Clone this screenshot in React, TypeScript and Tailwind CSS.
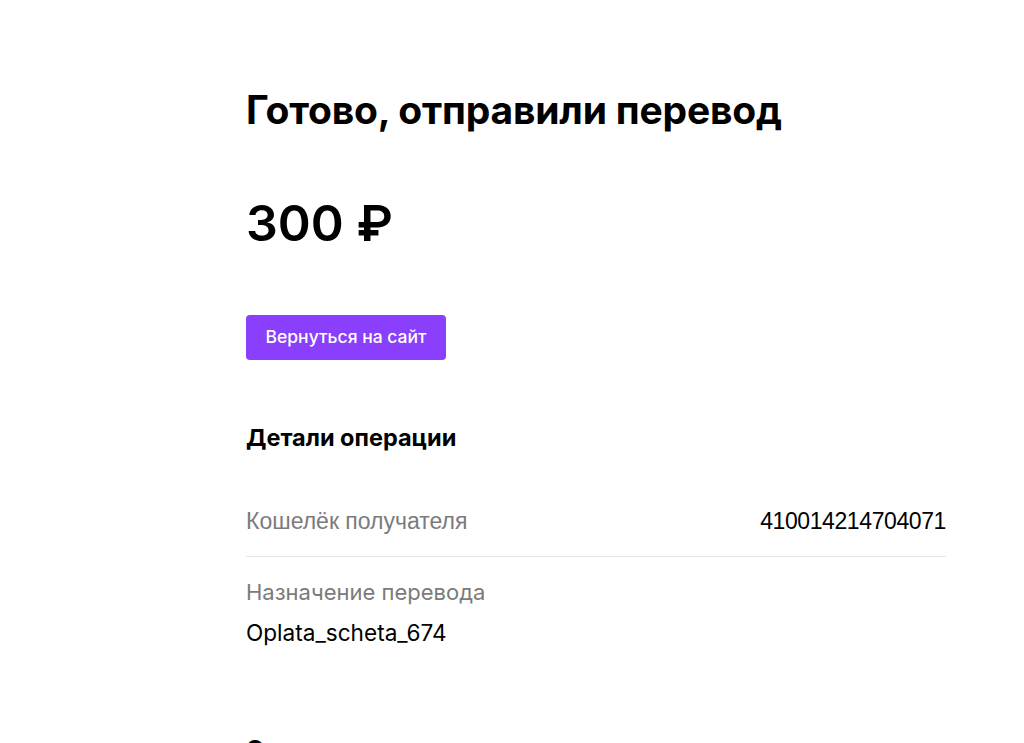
import React from 'react';

const details = [
    { label: 'Кошелёк получателя', value: '410014214704071', inline: true },
    { label: 'Назначение перевода', value: 'Oplata_scheta_674', inline: false },
];

const App: React.FC = () => {
    return (
        <div className="min-h-[743px] bg-white text-black font-['Inter',sans-serif] overflow-hidden relative">
            <main className="w-[700px] ml-[246px] pt-[86px]">
                <h1 className="text-[39px] leading-[48px] font-bold tracking-[-0.2px]">Готово, отправили перевод</h1>

                <div className="mt-[57px] text-[50px] leading-[64px] font-semibold">300 ₽</div>

                <button className="mt-[60px] h-[45px] w-[200px] rounded-[4px] bg-[#8a3ffc] text-white text-[17.5px] font-medium">
                    Вернуться на сайт
                </button>

                <h2 className="mt-[63px] text-[23.5px] leading-[30px] font-bold">Детали операции</h2>

                <div className="mt-[55px]">
                    {details.map((row) =>
                        row.inline ? (
                            <div key={row.label} className="flex justify-between items-center pb-[22px] border-b border-[#e6e6e6]">
                                <span className="text-[23px] leading-[26px] text-[#7b7b7b] font-['Liberation_Sans',sans-serif]">{row.label}</span>
                                <span className="text-[23px] leading-[26px] font-['Liberation_Sans',sans-serif] tracking-[-0.4px]">{row.value}</span>
                            </div>
                        ) : (
                            <div key={row.label} className="pt-[22px]">
                                <div className="text-[22px] leading-[26px] text-[#7b7b7b]">{row.label}</div>
                                <div className="mt-[15px] text-[22.6px] leading-[26px]">{row.value}</div>
                            </div>
                        )
                    )}
                </div>

                <h2 className="mt-[88px] text-[23.5px] leading-[30px] font-bold">Отправитель</h2>
            </main>

            {/* bottom strip */}
            <div className="absolute bottom-0 left-0 right-0 h-[2px] flex">
                <div className="w-[136px] bg-[#c8c8c8]" />
                <div className="flex-1 bg-[#1f2b2a]" />
            </div>
        </div>
    );
};

export default App;
